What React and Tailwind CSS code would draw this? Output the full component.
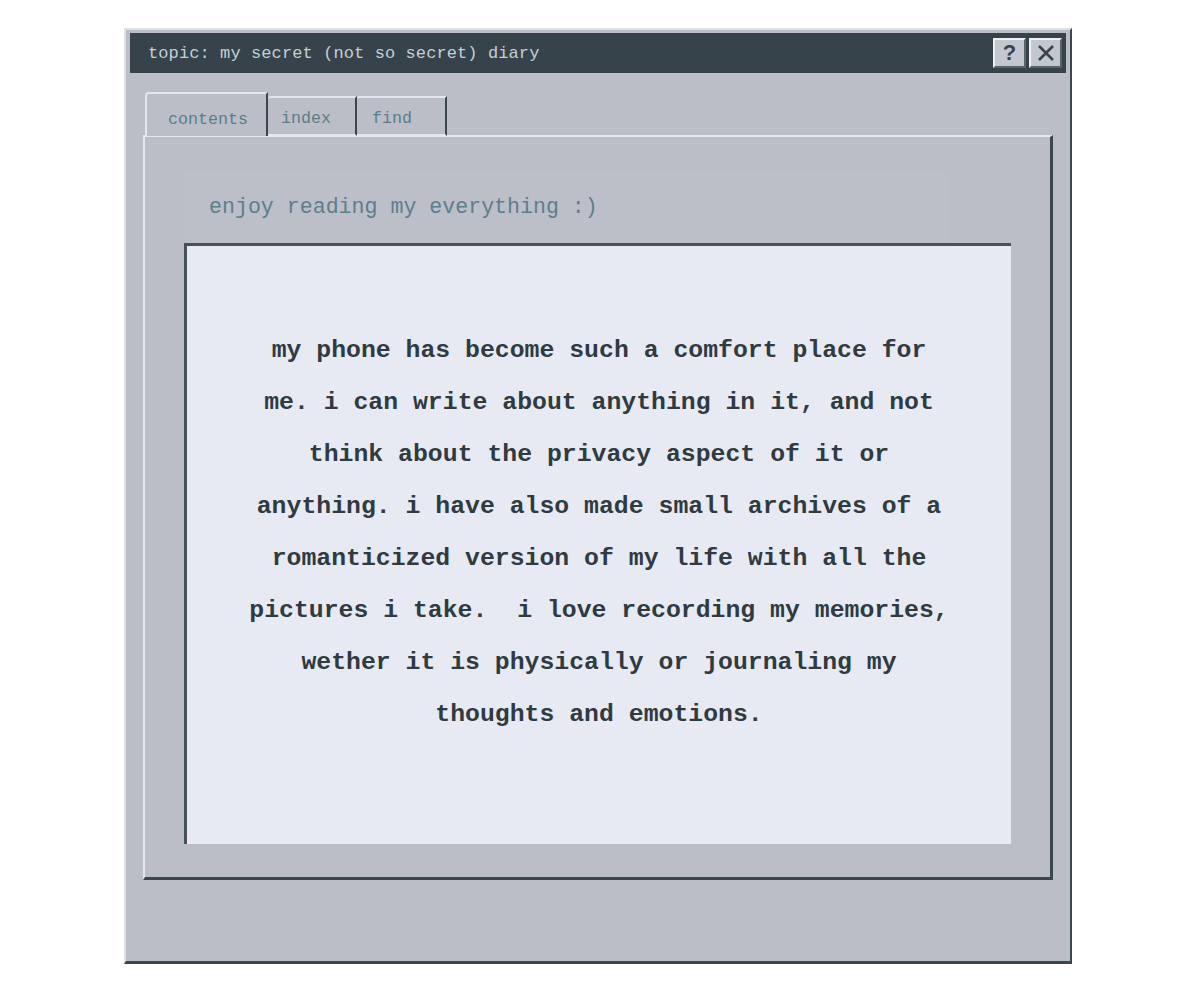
import React from "react";

const lines = [
  "my phone has become such a comfort place for",
  "me. i can write about anything in it, and not",
  "think about the privacy aspect of it or",
  "anything. i have also made small archives of a",
  "romanticized version of my life with all the",
  "pictures i take.\u00a0 i love recording my memories,",
  "wether it is physically or journaling my",
  "thoughts and emotions.",
];

const mono = "font-['Liberation_Mono','DejaVu_Sans_Mono',monospace]";

const TitleButton = ({ children }) => (
  <div className="w-[33px] h-[30px] flex items-center justify-center bg-[#c3c7ce] border-t-2 border-l-2 border-[#eef0f3] border-r-2 border-b-2 border-r-[#59646a] border-b-[#59646a] text-[#3a4449] text-[22px] font-bold leading-none font-['Liberation_Sans',Arial,sans-serif]">
    {children}
  </div>
);

const App = () => {
  return (
    <div className={`w-[1200px] h-[1000px] bg-white pt-[28px] pl-[124px] ${mono}`}>
      <div className="w-[948px] h-[936px] bg-[#bbbec7] border-l-[2px] border-t-[2px] border-[#dde0e6] border-r-[2px] border-b-[3px] border-r-[#3c474d] border-b-[#3c474d] pt-[3px] px-[4px] flex flex-col">
        <div className="h-[40px] bg-[#36434a] flex items-center justify-between pl-[18px] pr-[4px]">
          <span className="text-[17px] text-[#c3d0d5] tracking-[0.1px] pt-[2px]">
            topic: my secret (not so secret) diary
          </span>
          <div className="flex gap-[3px]">
            <TitleButton>?</TitleButton>
            <TitleButton>
              <svg width="20" height="20" viewBox="0 0 20 20">
                <path d="M3 3 L17 17 M17 3 L3 17" stroke="#3a4449" strokeWidth="2.6" />
              </svg>
            </TitleButton>
          </div>
        </div>

        <div className="px-[13px] pt-[19px] flex flex-col">
          <div className="flex items-end h-[44px] pl-[2px] relative z-10 -mb-[1px]">
            <div className="w-[123px] h-[44px] bg-[#bbbec7] border-t-2 border-l-2 border-[#e4e7ec] border-r-2 border-r-[#3c474d] rounded-tl-[4px] flex items-center pl-[21px] pt-[10px] text-[16.7px] text-[#5b7d88]">
              contents
            </div>
            <div className="w-[89px] h-[40px] bg-[#bbbec7] border-t-2 border-[#e4e7ec] border-r-2 border-r-[#3c474d] border-b-2 border-b-[#e4e7ec] rounded-tl-[3px] flex items-center pl-[13px] pt-[5px] text-[16.7px] text-[#5b7d88]">
              index
            </div>
            <div className="w-[90px] h-[40px] bg-[#bbbec7] border-t-2 border-[#e4e7ec] border-r-2 border-r-[#3c474d] border-b-2 border-b-[#e4e7ec] rounded-tl-[3px] flex items-center pl-[15px] pt-[5px] text-[16.7px] text-[#5b7d88]">
              find
            </div>
          </div>

          <div className="h-[745px] border-t-2 border-l-2 border-[#e4e7ec] border-r-[3px] border-b-[3px] border-r-[#3c474d] border-b-[#3c474d] flex flex-col px-[39px] pt-[35px]">
            <div className="h-[70px] flex items-center pl-[25px] mr-[62px] bg-[#bcbfc8]">
              <span className="text-[21.6px] text-[#5b7f8b]">enjoy reading my everything :)</span>
            </div>
            <div className="h-[601px] mt-[1px] bg-[#e7eaf3] border-t-[3px] border-l-[3px] border-[#46525a] pt-[78px] flex flex-col items-center">
              {lines.map((l) => (
                <p key={l} className="text-[24.8px] leading-[52px] font-bold text-[#2f3a41] whitespace-pre">
                  {l}
                </p>
              ))}
            </div>
          </div>
        </div>
      </div>
    </div>
  );
};

export default App;
